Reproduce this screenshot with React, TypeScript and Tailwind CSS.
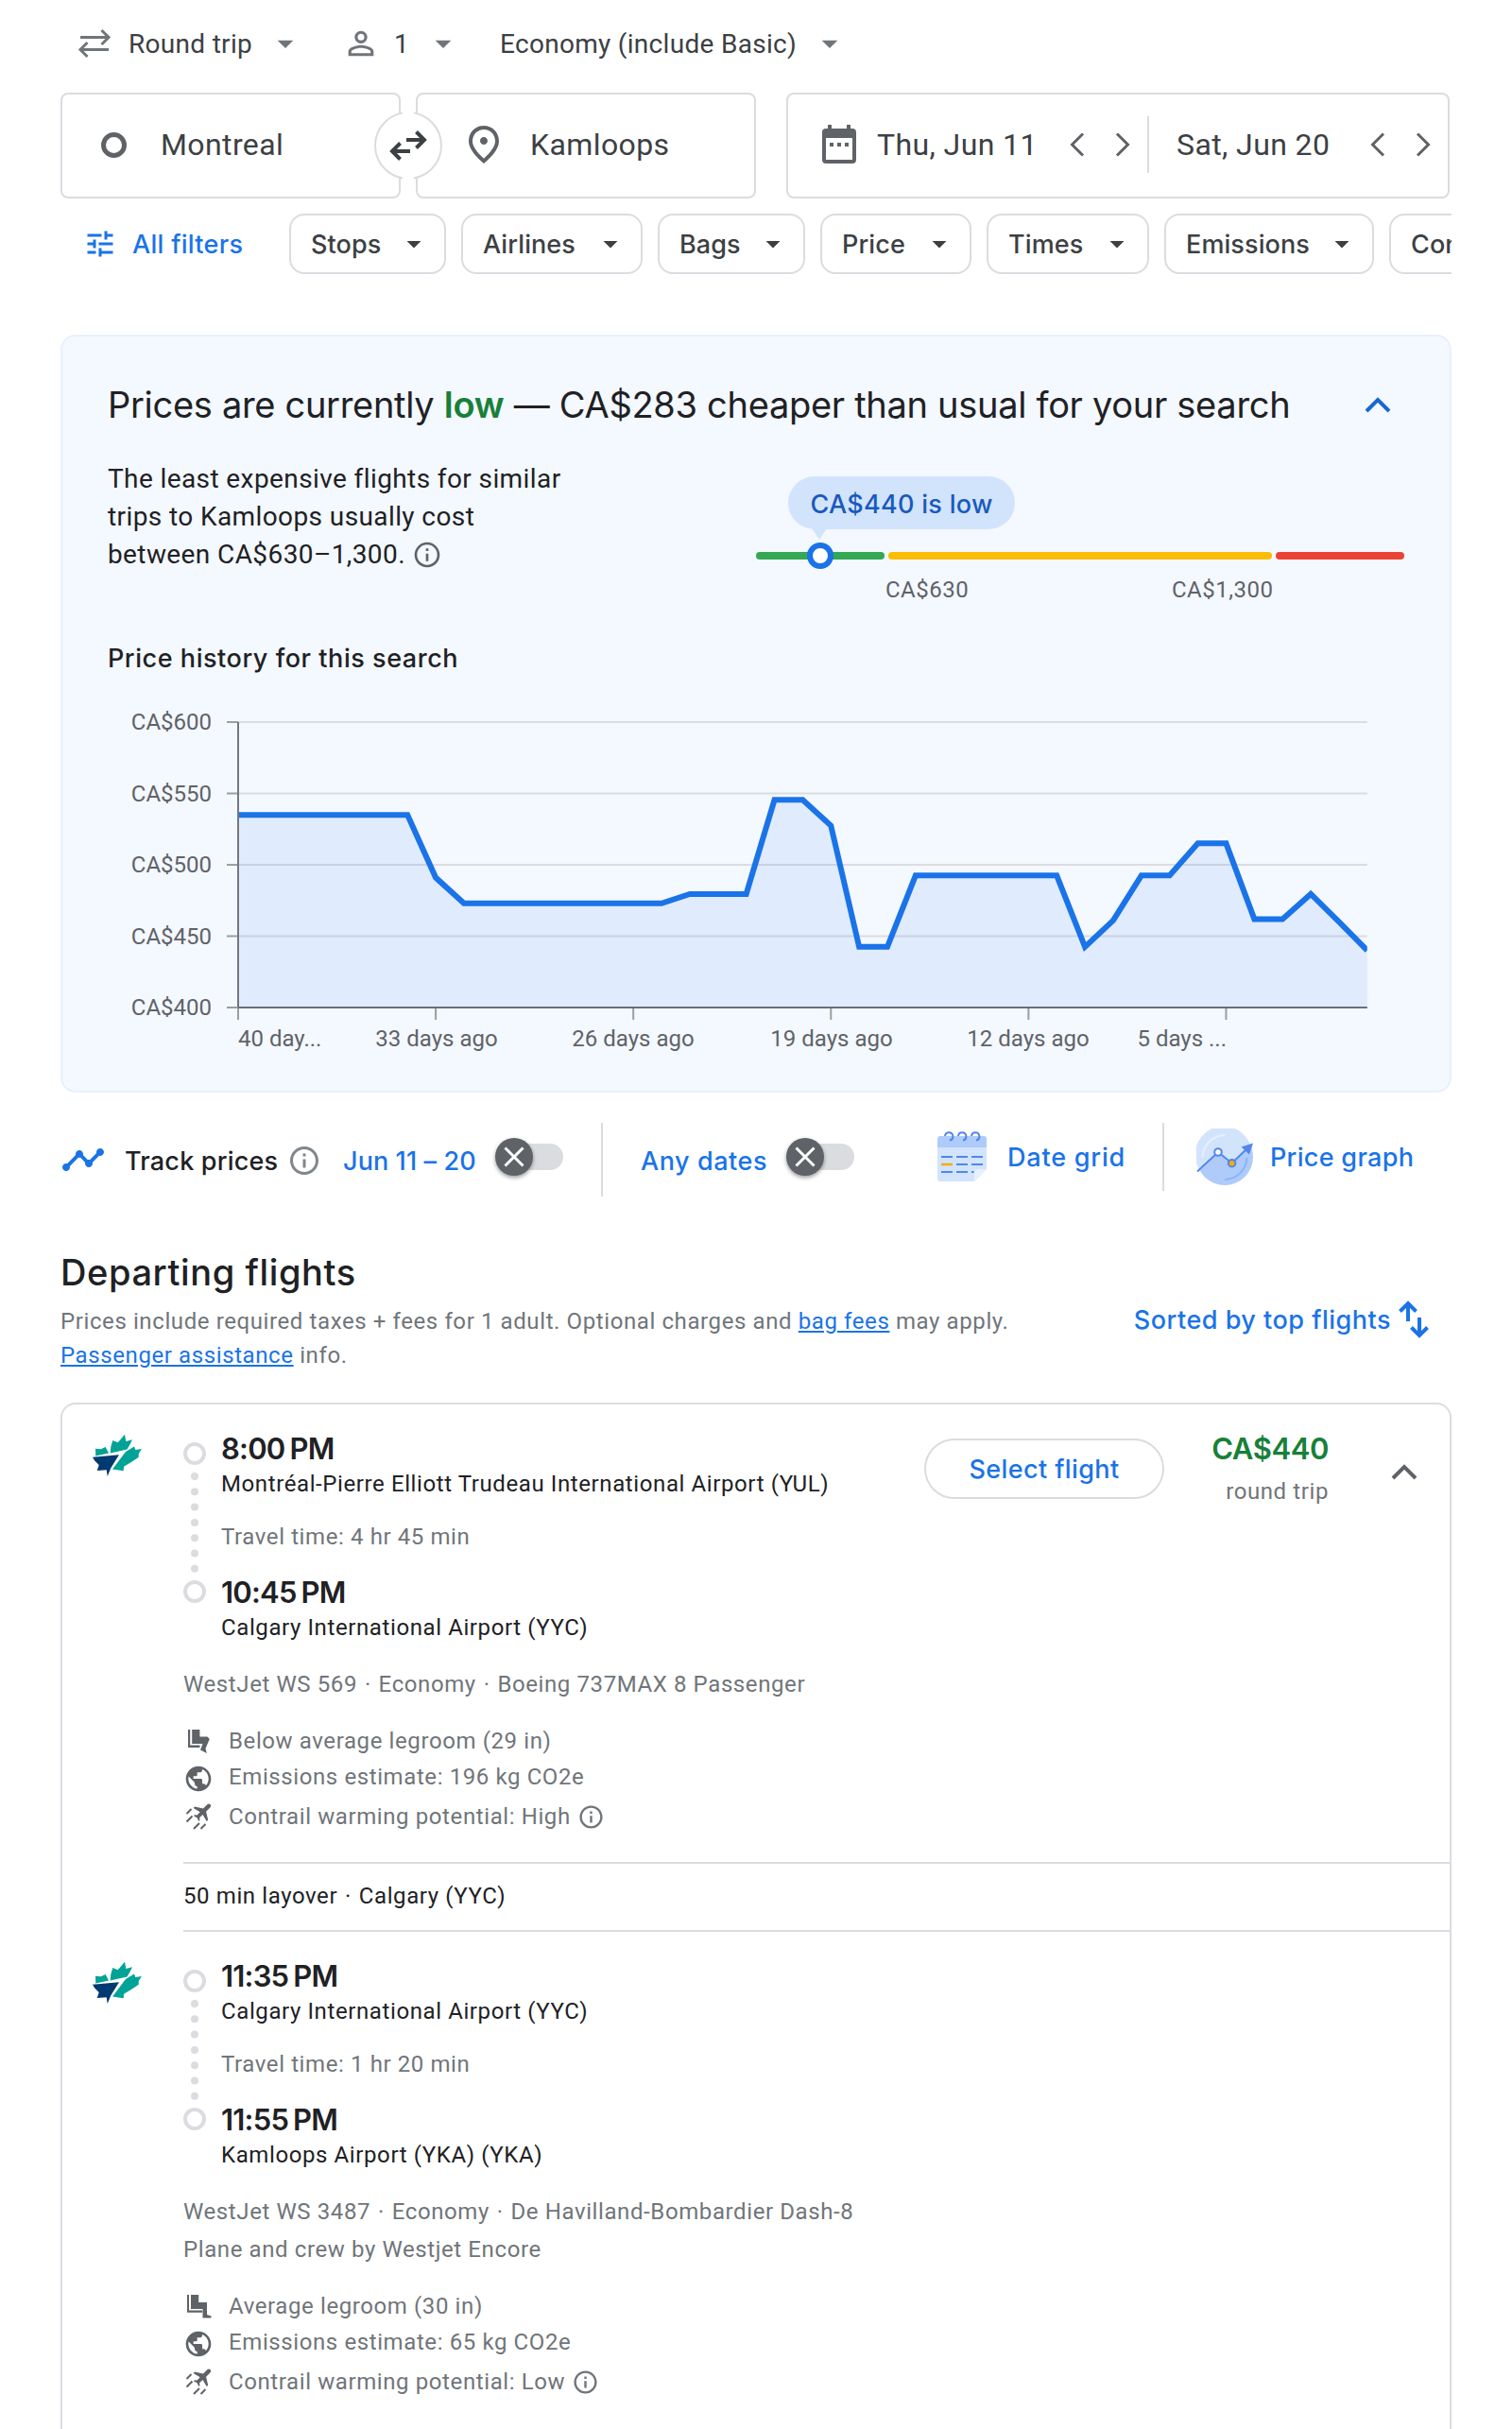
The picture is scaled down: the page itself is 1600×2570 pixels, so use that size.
import { Fragment, type ReactNode } from "react";
import {
  MdArrowDropDown,
  MdInfoOutline,
  MdOutlinePlace,
  MdPersonOutline,
  MdPublic,
  MdTimeline,
  MdTune,
} from "react-icons/md";

const filters = [
  { label: "Stops", width: "w-[166px]" },
  { label: "Airlines", width: "w-[192px]" },
  { label: "Bags", width: "w-[156px]" },
  { label: "Price", width: "w-[160px]" },
  { label: "Times", width: "w-[172px]" },
  { label: "Emissions", width: "w-[222px]" },
  { label: "Connecting airports", width: "w-[360px]" },
];

// one price per day, oldest (40 days ago) first
const history = [
  535, 535, 535, 535, 535, 535, 535, 491, 473, 473, 473, 473, 473, 473, 473, 473, 479.5, 479.5, 479.5,
  545.5, 545.5, 527.5, 442.5, 442.5, 492.5, 492.5, 492.5, 492.5, 492.5, 492.5, 442.5, 461, 492.5, 492.5,
  515, 515, 462, 462, 479.5, 460, 440,
];

type Leg = {
  depart: string;
  from: string;
  duration: string;
  arrive: string;
  to: string;
  flight: string[];
  operator?: string;
  legroom: string;
  reduced?: boolean;
  emissions: string;
  contrail: string;
};

const legs: Leg[] = [
  {
    depart: "8:00 PM",
    from: "Montréal-Pierre Elliott Trudeau International Airport (YUL)",
    duration: "Travel time: 4 hr 45 min",
    arrive: "10:45 PM",
    to: "Calgary International Airport (YYC)",
    flight: ["WestJet WS 569", "Economy", "Boeing 737MAX 8 Passenger"],
    legroom: "Below average legroom (29 in)",
    reduced: true,
    emissions: "Emissions estimate: 196 kg CO2e",
    contrail: "Contrail warming potential: High",
  },
  {
    depart: "11:35 PM",
    from: "Calgary International Airport (YYC)",
    duration: "Travel time: 1 hr 20 min",
    arrive: "11:55 PM",
    to: "Kamloops Airport (YKA) (YKA)",
    flight: ["WestJet WS 3487", "Economy", "De Havilland-Bombardier Dash-8"],
    operator: "Plane and crew by Westjet Encore",
    legroom: "Average legroom (30 in)",
    emissions: "Emissions estimate: 65 kg CO2e",
    contrail: "Contrail warming potential: Low",
  },
];

function Chevron({ d, className }: { d: string; className?: string }) {
  return (
    <svg width="32" height="32" viewBox="0 0 32 32" fill="none" stroke="currentColor" strokeWidth="3" className={className}>
      <path d={d} />
    </svg>
  );
}

const LEFT = "M22 4.5 10.5 16 22 27.5";
const RIGHT = "M10 4.5 21.5 16 10 27.5";

function SwapIcon({ className }: { className?: string }) {
  return (
    <svg width="40" height="32" viewBox="0 0 40 32" fill="none" stroke="currentColor" strokeWidth="4" className={className}>
      <path d="M18 10H37M28.5 1.5 37 10 28.5 18.5" />
      <path d="M22 22H3M11.5 13.5 3 22 11.5 30.5" />
    </svg>
  );
}

function TopBar() {
  return (
    <div className="mb-[6px] flex h-[92px] items-center pl-[18px] text-[28px] tracking-[0.3px] text-[#3c4043]">
      <svg width="36" height="32" viewBox="0 0 36 32" fill="none" stroke="#70757a" strokeWidth="3" className="shrink-0">
        <path d="M3 9.5H33M25.5 2 33 9.5 25.5 17" />
        <path d="M33 22.5H3M10.5 15 3 22.5 10.5 30" />
      </svg>
      <span className="ml-[18px] w-[146px] pt-px">Round trip</span>
      <MdArrowDropDown size={40} className="text-[#70757a]" />
      <MdPersonOutline size={40} className="ml-[40px] text-[#70757a]" />
      <span className="ml-[15px] w-[32px] pt-px">1</span>
      <MdArrowDropDown size={40} className="text-[#70757a]" />
      <span className="ml-[40px] w-[329px] pt-px">Economy (include Basic)</span>
      <MdArrowDropDown size={40} className="text-[#70757a]" />
    </div>
  );
}

function SearchBar() {
  const box = "flex h-[112px] items-center rounded-lg border-2 border-[#dadce0] pb-[2px]";
  return (
    <div className="relative flex text-[32px] tracking-[0.4px] text-[#3c4043]">
      <div className={`${box} w-[360px]`}>
        <span className="ml-[41px] size-[27px] rounded-full border-[5px] border-[#5f6368]" />
        <span className="ml-[36px]">Montreal</span>
      </div>
      <div className={`${box} ml-4 w-[360px]`}>
        <MdOutlinePlace size={48} className="ml-[46px] text-[#5f6368]" />
        <span className="ml-[25px]">Kamloops</span>
      </div>
      <div className="absolute top-[20px] left-[332px] flex size-[72px] items-center justify-center rounded-full border-2 border-[#dadce0] bg-white">
        <span className="absolute -top-[3px] -bottom-[3px] w-3 bg-white" />
        <SwapIcon className="relative text-[#3c4043]" />
      </div>
      <div className={`${box} ml-8 w-[702px]`}>
        <svg width="36" height="42" viewBox="0 0 36 42" className="ml-[36px]" fill="#5f6368">
          <path fillRule="evenodd" d="M6 0h4v4h16V0h4v4h2a4 4 0 0 1 4 4v29a4 4 0 0 1-4 4H4a4 4 0 0 1-4-4V8a4 4 0 0 1 4-4h2zM4 14v23h28V14z" />
          <path d="M8 19h4v4H8zM16 19h4v4h-4zM24 19h4v4h-4z" />
        </svg>
        <span className="ml-[22px] w-[196px]">Thu, Jun 11</span>
        <Chevron d={LEFT} className="text-[#5f6368]" />
        <Chevron d={RIGHT} className="ml-4 text-[#5f6368]" />
        <span className="ml-[10px] h-[60px] w-[2px] bg-[#dadce0]" />
        <span className="ml-[29px] w-[197px]">Sat, Jun 20</span>
        <Chevron d={LEFT} className="text-[#5f6368]" />
        <Chevron d={RIGHT} className="ml-4 text-[#5f6368]" />
      </div>
    </div>
  );
}

function Filters() {
  return (
    <div className="mt-4 flex h-16 overflow-hidden font-['Inter',sans-serif] text-[27px] font-medium tracking-[0.1px]">
      <div className="flex w-[242px] shrink-0 items-center pl-6 text-[#1a73e8]">
        <MdTune size={36} />
        <span className="ml-[16px] pt-[2px] tracking-[0.3px]">All filters</span>
      </div>
      <div className="flex gap-4">
        {filters.map((f) => (
          <div
            key={f.label}
            className={`${f.width} flex shrink-0 items-center justify-between rounded-2xl border-2 border-[#dadce0] pr-[14px] pl-[21px] whitespace-nowrap text-[#3c4043]`}
          >
            <span className="pt-[2px]">{f.label}</span>
            <MdArrowDropDown size={36} />
          </div>
        ))}
      </div>
    </div>
  );
}

function PriceScale() {
  return (
    <div className="w-[686px] pt-[18px]">
      <div className="relative ml-[34px] flex h-14 w-[240px] items-center justify-center rounded-full bg-[#d2e3fc] pt-1 font-['Inter',sans-serif] text-[27px] font-medium tracking-[0.3px] text-[#185abc]">
        CA$440 is low
        <svg width="16" height="12" viewBox="0 0 16 12" className="absolute top-[55px] left-[25px]">
          <path d="M0 0h16L8 12z" fill="#d2e3fc" />
        </svg>
      </div>
      <div className="relative mt-6 flex h-2 gap-1">
        <span className="w-[136px] rounded-full bg-[#34a853]" />
        <span className="w-[406px] rounded-full bg-[#fbbc04]" />
        <span className="w-[136px] rounded-full bg-[#ea4335]" />
        <span className="absolute -top-[10px] left-[54px] size-7 rounded-full border-[6px] border-[#1a73e8] bg-white" />
      </div>
      <div className="mt-4 flex text-[24px] leading-8 tracking-[0.5px] text-[#5f6368]">
        <span className="ml-[137px] w-[303px]">CA$630</span>
        <span>CA$1,300</span>
      </div>
    </div>
  );
}

function HistoryChart() {
  const left = 186;
  const bottom = 350;
  const step = 29.87;
  const y = (price: number) => bottom - (price - 400) * 1.51;
  const line = history.map((p, i) => `${left + i * step},${y(p)}`).join(" ");
  const right = left + 40 * step;

  return (
    <svg width="1468" height="438" viewBox="0 0 1468 438" className="block text-[24px]">
      {[600, 550, 500, 450, 400].map((p) => (
        <g key={p}>
          <rect x={left} y={y(p) - 1} width={right - left} height="2" fill="#dadce0" />
          <rect x={left - 12} y={y(p) - 1} width="12" height="2" fill="#9e9e9e" />
          <text x={left - 28} y={y(p) + 8} textAnchor="end" fill="#5f6368">{`CA$${p}`}</text>
        </g>
      ))}
      <polygon points={`${left},${bottom} ${line} ${right},${bottom}`} fill="#1a73e8" fillOpacity="0.09" />
      <clipPath id="plot">
        <rect x={left} y="0" width={right - left} height={bottom} />
      </clipPath>
      <polyline points={line} fill="none" stroke="#1a73e8" strokeWidth="6" clipPath="url(#plot)" />
      <rect x={left - 1} y={y(600)} width="2" height={bottom - y(600)} fill="#757780" />
      <rect x={left} y={bottom - 1} width={right - left} height="2" fill="#6b6e76" />
      {[0, 7, 14, 21, 28, 35].map((i) => (
        <rect key={i} x={left + i * step - 1} y={bottom + 1} width="2" height="12" fill="#9e9e9e" />
      ))}
      <g fill="#5f6368" textAnchor="middle">
        <text x={left} y="391" textAnchor="start">40 day...</text>
        <text x="396" y="391">33 days ago</text>
        <text x="604" y="391">26 days ago</text>
        <text x="814" y="391">19 days ago</text>
        <text x="1022" y="391">12 days ago</text>
        <text x="1232" y="391" textAnchor="end">5 days ...</text>
      </g>
    </svg>
  );
}

function PriceInsights() {
  return (
    <section className="mt-16 h-[802px] rounded-2xl border-2 border-[#e8f0fe] bg-[#f4f8ff] pt-[46px] text-[#202124]">
      <div className="flex h-[52px] items-center justify-between pr-[60px] pl-12 font-['Inter',sans-serif]">
        <h2 className="text-[38px] tracking-[-0.3px] whitespace-nowrap">
          Prices are currently <b className="font-semibold text-[#188038]">low</b> — CA$283 cheaper than usual for your search
        </h2>
        <Chevron d="M4 23 16 11 28 23" className="text-[#1967d2] [stroke-width:4]" />
      </div>
      <div className="mt-8 flex h-[154px] pl-12">
        <p className="w-[686px] pt-px text-[28px] leading-10 tracking-[0.4px]">
          The least expensive flights for similar
          <br />
          trips to Kamloops usually cost
          <br />
          between CA$630–1,300.
          <MdInfoOutline size={32} className="ml-[7px] inline align-[-7px] text-[#5f6368]" />
        </p>
        <PriceScale />
      </div>
      <h3 className="mt-9 h-10 pt-px pl-12 font-['Inter',sans-serif] text-[27px] leading-10 font-medium tracking-[0.55px]">
        Price history for this search
      </h3>
      <HistoryChart />
    </section>
  );
}

function Toggle() {
  return (
    <span className="relative flex h-10 w-[72px] shrink-0 items-center justify-end">
      <span className="h-7 w-14 rounded-full bg-[#dadce0]" />
      <span className="absolute left-0 flex size-10 items-center justify-center rounded-full bg-[#5f6368] shadow-[0_2px_4px_rgba(0,0,0,0.4)]">
        <svg width="24" height="24" viewBox="0 0 24 24" stroke="#fff" strokeWidth="3">
          <path d="M2.5 2.5l19 19M21.5 2.5l-19 19" />
        </svg>
      </span>
    </span>
  );
}

function DateGridIcon() {
  return (
    <svg width="52" height="54" viewBox="0 0 52 54" fill="none" className="shrink-0">
      <path d="M0 17H52V40L39 53H3a3 3 0 0 1-3-3z" fill="#d2e3fc" />
      <path d="M0 17V8a3 3 0 0 1 3-3H49a3 3 0 0 1 3 3v9z" fill="#aecbfa" />
      <path d="M52 40H42.5Q39 40 39 44V53z" fill="#e8f0fe" />
      <path d="M8 5a4.200 4.200 0 1 1 5 4.500M22 5a4.200 4.200 0 1 1 5 4.500M36 5a4.200 4.200 0 1 1 5 4.500" stroke="#5286ec" strokeWidth="2" />
      <path d="M4 27H16M20 27H32M36 27H48M20 35H32M36 35H48M4 43H16M20 43H32M36 43H38.5" stroke="#5286ec" strokeWidth="2.2" />
      <path d="M4 35H16" stroke="#f9ab00" strokeWidth="2.5" />
    </svg>
  );
}

function PriceGraphIcon() {
  return (
    <svg width="60" height="60" viewBox="0 0 60 60" fill="none" className="shrink-0">
      <circle cx="30" cy="30" r="30" fill="#aecbfa" />
      <path d="M4 44.500 23 25 37.600 36.700 57 17.500A30 30 0 1 0 4 44.500z" fill="#d2e3fc" />
      <path d="M6.500 30A24 24 0 0 1 30 7" stroke="#e8f0fe" strokeWidth="2" />
      <path d="M53.500 31A24 24 0 0 1 30 54" stroke="#8ab4f8" strokeWidth="2" />
      <path d="M1 45.500 23 25 37.600 36.700 55 20" stroke="#5286ec" strokeWidth="2" />
      <path d="M60 15.500 47.500 19.500 56 27.500z" fill="#5286ec" />
      <circle cx="23" cy="25" r="3.8" fill="#fff" stroke="#5286ec" strokeWidth="2" />
      <circle cx="37.6" cy="36.7" r="3.8" fill="#f9ab00" stroke="#5286ec" strokeWidth="2" />
    </svg>
  );
}

function TrackBar() {
  return (
    <div className="mt-8 flex h-[72px] items-center font-['Inter',sans-serif] text-[27px] font-medium whitespace-nowrap text-[#1a73e8]">
      <MdTimeline size={48} className="-mb-[6px] shrink-0" />
      <span className="ml-5 w-[172px] pt-[10px] tracking-[0.2px] text-[#202124]">Track prices</span>
      <MdInfoOutline size={36} className="-mb-2 shrink-0 text-[#80868b]" />
      <span className="ml-[23px] w-[161px] pt-[10px] tracking-[0.1px]">Jun 11 – 20</span>
      <Toggle />
      <span className="-mb-[6px] ml-10 h-[78px] w-[2px] bg-[#dadce0]" />
      <span className="ml-10 w-[154px] pt-[10px] tracking-[0.55px]">Any dates</span>
      <Toggle />
      <span className="w-[88px]" />
      <DateGridIcon />
      <span className="ml-[22px] w-[164px] pt-[2px] tracking-[0.8px]">Date grid</span>
      <span className="h-[72px] w-[2px] bg-[#dadce0]" />
      <span className="w-[34px]" />
      <PriceGraphIcon />
      <span className="ml-[18px] pt-[2px] tracking-[0.3px]">Price graph</span>
    </div>
  );
}

function ResultsHeader() {
  return (
    <div className="mt-[62px]">
      <h2 className="font-['Inter',sans-serif] text-[38px] leading-[48px] font-medium tracking-[0.6px] text-[#202124]">
        Departing flights
      </h2>
      <div className="mt-[10px] flex justify-between">
        <p className="text-[24px] leading-9 tracking-[0.6px] text-[#70757a]">
          Prices include required taxes + fees for 1 adult. Optional charges and{" "}
          <a className="text-[#1a73e8] underline">bag fees</a> may apply.
          <br />
          <a className="text-[#1a73e8] underline">Passenger assistance</a> info.
        </p>
        <div className="flex h-8 items-center gap-[4px] pr-5 font-['Inter',sans-serif] text-[27px] font-medium tracking-[0.5px] text-[#1a73e8]">
          <span className="pt-[2px]">Sorted by top flights</span>
          <SwapIcon className="rotate-90" />
        </div>
      </div>
    </div>
  );
}

function WestJetLogo() {
  return (
    <svg width="52" height="46" viewBox="0 0 52 46">
      <g fill="#00a396">
        <path d="M18.700 20.500 19.300 13.700 21.300 7 26.700 9.300 34 .7 35.300 8 42 6.300 39.300 11.700 36.500 16.500z" />
        <path d="M3.300 23.500 3 15.700 8.700 16.300 13.700 14 17 20.600z" />
        <path d="M44 13.500 45.300 17 52 16 48.700 21 48.700 24.700 41.300 29.700 33 34.700 32.700 39.300 21 37.500 35 19z" />
      </g>
      <path d="M0 24.700 28 22.300 19.300 36.300 15.700 45 14.700 38.300 4.700 39 6.700 33 2 28.300z" fill="#003a70" />
    </svg>
  );
}

function SeatIcon({ reduced }: { reduced?: boolean }) {
  return (
    <svg width="28" height="28" viewBox="0 0 28 28" fill="currentColor">
      {reduced ? (
        <path d="M7.200 2H15.400V9.500H23.500L25.800 12 21.500 22 22.800 27 16 23.500 18.500 17H7.200zM3 2h2.200v16.600h10.300V21H3z" />
      ) : (
        <path d="M6 2h8.200v8H23v13l4.500 1.500V26.500H18.500V17H6zM2 2h2v16.500h14v2.300H2z" />
      )}
    </svg>
  );
}

function ContrailIcon() {
  return (
    <svg width="28" height="28" viewBox="0 0 28 28" fill="currentColor">
      <path d="M26.600 1.200c-1-1-2.600-.6-3.600.4L19 5.600 10 3.500 8.600 5l7.100 4.200-3.200 3.400-2.600-.4-1.100 1.100 3.700 1.900 1.900 3.700 1.100-1.100-.4-2.600 3.400-3.200 4.200 7.100 1.500-1.400L22.100 8.700l4-4c1-1 1.400-2.600.5-3.500z" />
      <path d="M1.500 11 6.500 6M1.500 19.500 7.500 13.500M9 27 15 21M16.500 27 21.500 22" fill="none" stroke="currentColor" strokeWidth="2" />
    </svg>
  );
}

function Amenity({ icon, className, children }: { icon: ReactNode; className?: string; children: ReactNode }) {
  return (
    <div className={`flex h-8 items-center ${className ?? ""}`}>
      <span className="ml-[2px] w-[46px] text-[#5f6368]">{icon}</span>
      {children}
    </div>
  );
}

function Timeline() {
  return (
    <svg width="24" height="170" viewBox="0 0 24 170" fill="#dadce0" className="mt-[13px] shrink-0">
      <circle cx="12" cy="12" r="10" fill="none" stroke="#dadce0" strokeWidth="4" />
      {[0, 1, 2, 3, 4, 5, 6].map((i) => (
        <circle key={i} cx="12" cy={36 + i * 16.3} r="4" />
      ))}
      <circle cx="12" cy="158" r="10" fill="none" stroke="#dadce0" strokeWidth="4" />
    </svg>
  );
}

function Time({ children }: { children: string }) {
  return (
    <div className="font-['Inter',sans-serif] text-[31px] leading-10 font-semibold tracking-[-0.8px] [word-spacing:-2px]">
      {children}
    </div>
  );
}

function Dotted({ parts }: { parts: string[] }) {
  return (
    <div>
      {parts.map((p, i) => (
        <Fragment key={p}>
          {i > 0 && <span className="mx-[1.3px]"> · </span>}
          {p}
        </Fragment>
      ))}
    </div>
  );
}

function LegDetails({ leg, children }: { leg: Leg; children?: ReactNode }) {
  return (
    <div className="flex pt-[27px] pb-8">
      <div className="w-32 shrink-0 pt-1 pl-8">
        <WestJetLogo />
      </div>
      <div className="flex-1 text-[24px] leading-8 tracking-[0.6px] whitespace-nowrap text-[#70757a]">
        <div className="flex text-[#202124]">
          <Timeline />
          <div className="ml-4">
            <Time>{leg.depart}</Time>
            <div className="mt-px">{leg.from}</div>
            <div className="mt-6 text-[#70757a]">{leg.duration}</div>
            <div className="mt-[23px]">
              <Time>{leg.arrive}</Time>
            </div>
            <div className="mt-px">{leg.to}</div>
          </div>
        </div>
        <div className="mt-6 leading-10">
          <Dotted parts={leg.flight} />
          {leg.operator && <div>{leg.operator}</div>}
        </div>
        <Amenity className="mt-6" icon={<SeatIcon reduced={leg.reduced} />}>
          {leg.legroom}
        </Amenity>
        <Amenity className="mt-[6px]" icon={<MdPublic size={32} className="-mb-1 -ml-[2px]" />}>
          {leg.emissions}
        </Amenity>
        <Amenity className="mt-[10px]" icon={<ContrailIcon />}>
          {leg.contrail}
          <MdInfoOutline size={29} className="ml-[7px]" />
        </Amenity>
      </div>
      {children}
    </div>
  );
}

export default function App() {
  return (
    <div className="h-[2570px] w-[1600px] overflow-hidden bg-white px-16 font-['Roboto',sans-serif]">
      <TopBar />
      <SearchBar />
      <Filters />
      <PriceInsights />
      <TrackBar />
      <ResultsHeader />
      <section className="mt-8 h-[1200px] rounded-2xl border-2 border-[#dadce0]">
        <LegDetails leg={legs[0]}>
          <div className="flex pr-[32px]">
            <button
              type="button"
              className="mt-[9px] h-16 w-[254px] rounded-full border-2 border-[#dadce0] pt-[2px] font-['Inter',sans-serif] text-[27px] font-medium tracking-[0.4px] text-[#1a73e8]"
            >
              Select flight
            </button>
            <div className="w-[174px] text-right">
              <div className="font-['Inter',sans-serif] text-[31px] leading-10 font-semibold tracking-[-0.4px] text-[#188038]">
                CA$440
              </div>
              <div className="mt-[9px] text-[24px] leading-8 tracking-[0.6px] text-[#70757a]">round trip</div>
            </div>
            <Chevron d="M4 23 16 11 28 23" className="mt-[28px] ml-[64px] text-[#5f6368] [stroke-width:4]" />
          </div>
        </LegDetails>
        <div className="ml-32 flex h-[74px] items-center border-y-2 border-[#dadce0] pb-[2px] text-[24px] tracking-[0.6px] whitespace-pre text-[#202124]">
          <Dotted parts={["50 min layover", "Calgary (YYC)"]} />
        </div>
        <LegDetails leg={legs[1]} />
      </section>
    </div>
  );
}
